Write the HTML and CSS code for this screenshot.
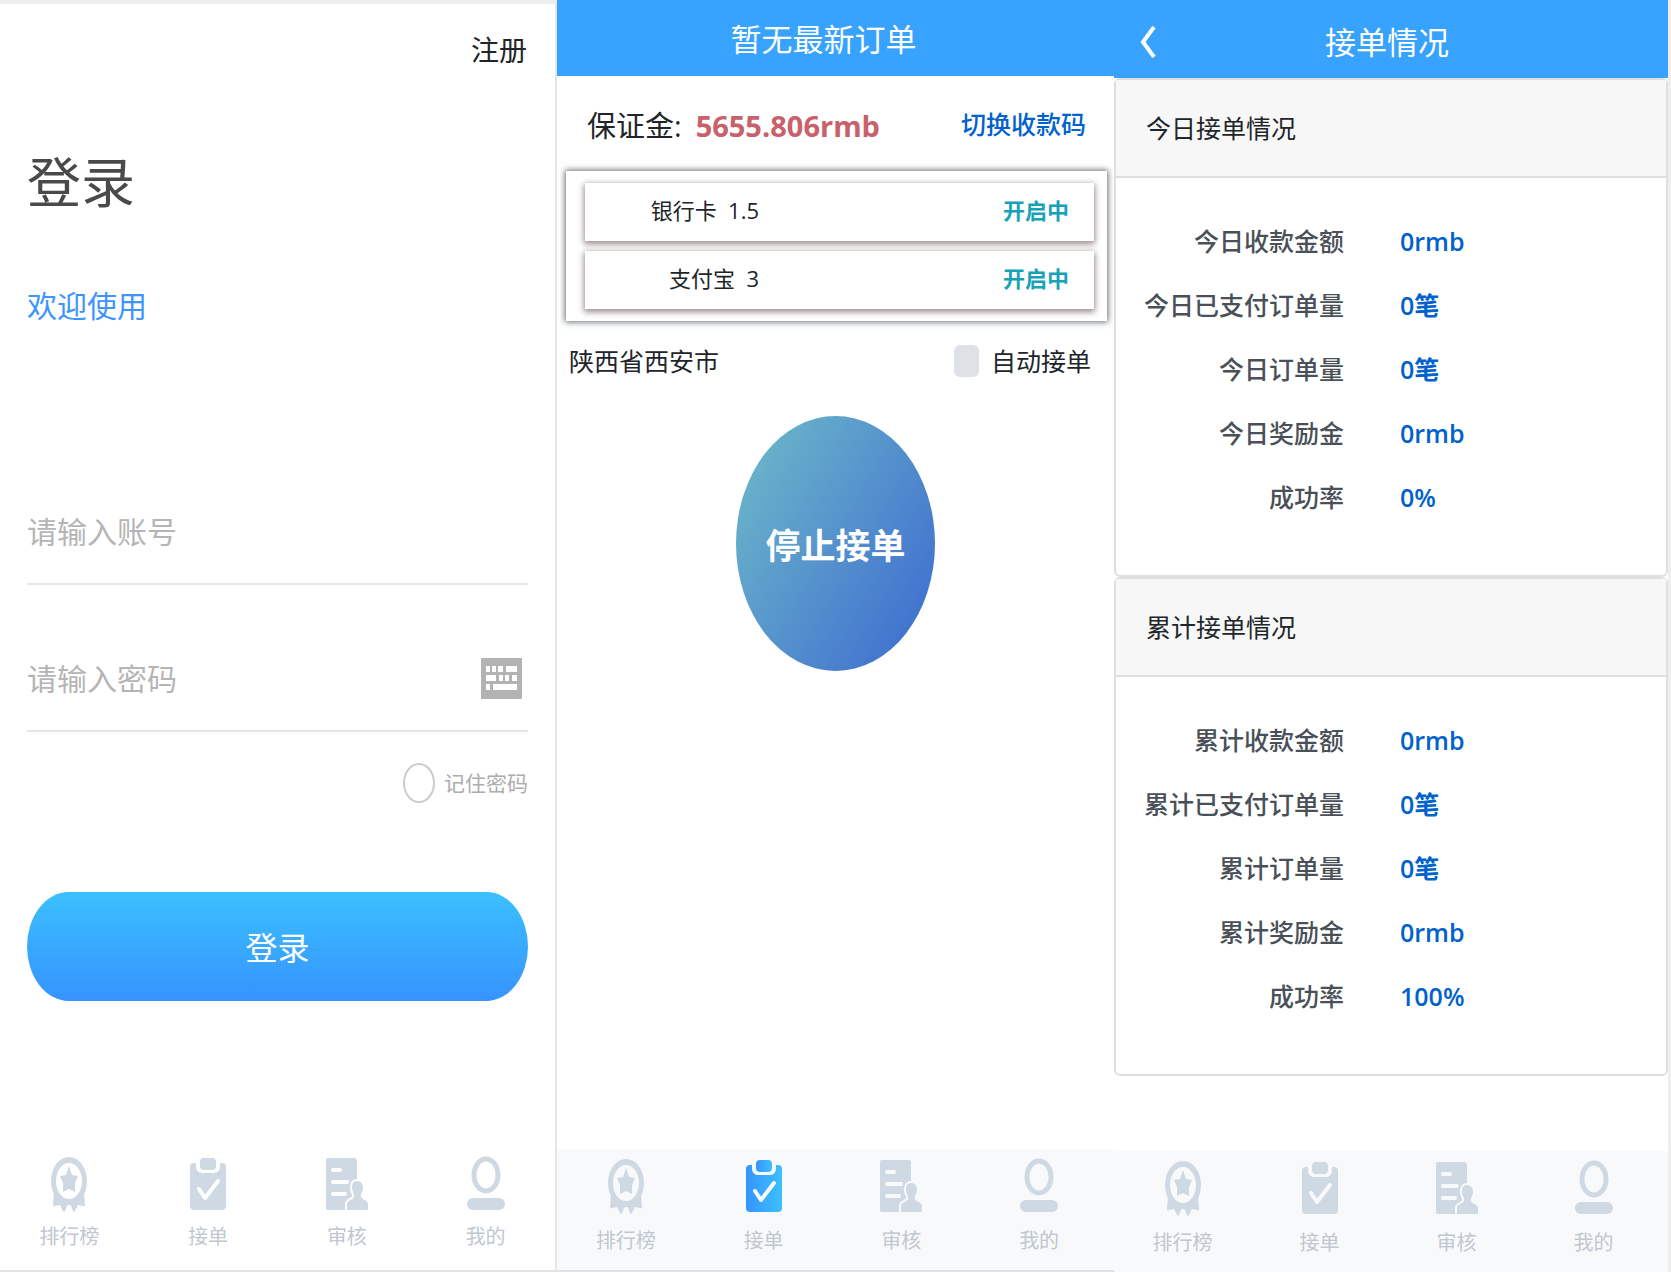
FILE: index.html
```html
<!DOCTYPE html>
<html lang="zh-CN">
<head>
<meta charset="utf-8">
<meta name="viewport" content="width=device-width, initial-scale=1">
<title>接单</title>
<link rel="stylesheet" href="styles.css">
</head>
<body>
<svg class="sprite" aria-hidden="true">
  <defs>
    <linearGradient id="active-fill" x1="0" y1="0" x2="1" y2="0">
      <stop offset="0" stop-color="#3594ff"/>
      <stop offset="1" stop-color="#3cc0ff"/>
    </linearGradient>
  </defs>
  <symbol id="icon-rank" viewBox="0 0 44 58">
    <path d="M7 36 6 49Q6 51 8 50L13 49 16 55Q17 57 18 55L20 50Q22 47 24 50L26 55Q27 57 28 55L31 49 36 50Q38 51 38 49L37 36Z"/>
    <ellipse cx="22" cy="25" rx="18" ry="24"/>
    <ellipse class="cut" cx="22" cy="25" rx="13" ry="18"/>
    <path d="M22 10 25 19 31 20 28 27 28 36 22 33 16 36 16 27 13 20 19 19Z"/>
  </symbol>
  <symbol id="icon-order" viewBox="0 0 44 58">
    <rect x="4" y="7" width="36" height="47" rx="4"/>
    <path class="cut" d="M10 6H34V10Q34 17 28 17H16Q10 17 10 10Z"/>
    <rect x="14" y="2" width="16" height="12" rx="4"/>
    <path class="cut-line" d="M13 33 19 42 32 25"/>
  </symbol>
  <symbol id="icon-review" viewBox="0 0 44 58">
    <path d="M3 2H29Q32 2 32 5V54H3Q1 54 1 52V4Q1 2 3 2Z"/>
    <path class="cut-line" d="M8 14H15M8 26H22M8 38H20"/>
    <path class="cut-edge" d="M32 25C28 25 27 28 27 32 27 36 30 38 29 41 28 44 22 44 22 48V54H43V48C43 44 37 44 36 41 35 38 38 36 38 32 38 28 36 25 32 25Z"/>
  </symbol>
  <symbol id="icon-mine" viewBox="0 0 44 58">
    <ellipse class="ring" cx="22" cy="19" rx="12" ry="16"/>
    <rect x="3" y="42" width="38" height="12" rx="6"/>
  </symbol>
</svg>

<main class="screens">
  <section class="screen login">
    <header class="login-top"><a class="register" href="#">注册</a></header>
    <form class="login-form">
      <h1 class="login-title">登录</h1>
      <p class="welcome">欢迎使用</p>
      <div class="field">
        <input class="field-input" type="text" placeholder="请输入账号" aria-label="账号">
      </div>
      <div class="field">
        <input class="field-input" type="password" placeholder="请输入密码" aria-label="密码">
        <svg class="keyboard" viewBox="0 0 41 41" aria-hidden="true">
          <rect width="41" height="41" rx="1" fill="#b3b3b3"/>
          <path fill="#fff" d="M5 8h4v6H5zM11 8h4v6h-4zM17 8h5v6h-5zM25 8h11v6H25zM5 17h10v6H5zM18 17h4v6h-4zM24 17h4v6h-4zM31 17h5v6h-5zM5 26h4v6H5zM12 26h24v6H12z"/>
        </svg>
      </div>
      <label class="remember"><input class="remember-dot" type="radio" name="remember">记住密码</label>
      <button class="login-button" type="button">登录</button>
    </form>
    <nav class="tabs">
      <a class="tab" href="#"><svg class="tab-icon"><use href="#icon-rank"/></svg>排行榜</a>
      <a class="tab" href="#"><svg class="tab-icon"><use href="#icon-order"/></svg>接单</a>
      <a class="tab" href="#"><svg class="tab-icon"><use href="#icon-review"/></svg>审核</a>
      <a class="tab" href="#"><svg class="tab-icon"><use href="#icon-mine"/></svg>我的</a>
    </nav>
  </section>

  <section class="screen orders">
    <header class="bar bar-orders"><h2 class="bar-title">暂无最新订单</h2></header>
    <div class="deposit">
      <span>保证金:</span>
      <strong class="deposit-value">5655.806rmb</strong>
      <a class="switch-code" href="#">切换收款码</a>
    </div>
    <ul class="channels">
      <li class="channel"><span class="channel-name">银行卡&nbsp; 1.5</span><span class="channel-state">开启中</span></li>
      <li class="channel"><span class="channel-name">支付宝&nbsp; 3</span><span class="channel-state">开启中</span></li>
    </ul>
    <div class="place">
      <span>陕西省西安市</span>
      <label class="auto"><input class="auto-box" type="checkbox">自动接单</label>
    </div>
    <button class="stop" type="button">停止接单</button>
    <nav class="tabs tabs-filled">
      <a class="tab" href="#"><svg class="tab-icon"><use href="#icon-rank"/></svg>排行榜</a>
      <a class="tab tab-active" href="#"><svg class="tab-icon"><use href="#icon-order"/></svg>接单</a>
      <a class="tab" href="#"><svg class="tab-icon"><use href="#icon-review"/></svg>审核</a>
      <a class="tab" href="#"><svg class="tab-icon"><use href="#icon-mine"/></svg>我的</a>
    </nav>
  </section>

  <section class="screen stats">
    <header class="bar bar-stats">
      <button class="back" type="button" aria-label="返回"><svg class="back-icon" viewBox="0 0 16 32"><path d="M14 1 3 16 14 31"/></svg></button>
      <h2 class="bar-title">接单情况</h2>
    </header>
    <article class="card">
      <h3 class="card-title">今日接单情况</h3>
      <dl class="figures">
        <dt>今日收款金额</dt><dd>0rmb</dd>
        <dt>今日已支付订单量</dt><dd>0笔</dd>
        <dt>今日订单量</dt><dd>0笔</dd>
        <dt>今日奖励金</dt><dd>0rmb</dd>
        <dt>成功率</dt><dd>0%</dd>
      </dl>
    </article>
    <article class="card">
      <h3 class="card-title">累计接单情况</h3>
      <dl class="figures">
        <dt>累计收款金额</dt><dd>0rmb</dd>
        <dt>累计已支付订单量</dt><dd>0笔</dd>
        <dt>累计订单量</dt><dd>0笔</dd>
        <dt>累计奖励金</dt><dd>0rmb</dd>
        <dt>成功率</dt><dd>100%</dd>
      </dl>
    </article>
    <nav class="tabs tabs-filled">
      <a class="tab" href="#"><svg class="tab-icon"><use href="#icon-rank"/></svg>排行榜</a>
      <a class="tab" href="#"><svg class="tab-icon"><use href="#icon-order"/></svg>接单</a>
      <a class="tab" href="#"><svg class="tab-icon"><use href="#icon-review"/></svg>审核</a>
      <a class="tab" href="#"><svg class="tab-icon"><use href="#icon-mine"/></svg>我的</a>
    </nav>
  </section>
</main>
</body>
</html>
```
FILE: styles.css
```css
*, *::before, *::after { box-sizing: border-box; }

body {
  margin: 0;
  background: #fff;
  color: #212529;
  font-family: "Open Sans", "Noto Sans CJK SC", sans-serif;
  font-size: 25px;
  line-height: 32px;
}

h1, h2, h3, p, ul, dl, dd { margin: 0; padding: 0; font-weight: 400; }
a { color: inherit; text-decoration: none; }
button, input { font: inherit; }
button { border: 0; padding: 0; cursor: pointer; }

.sprite { display: block; width: 0; height: 0; }

.screens {
  display: grid;
  grid-template-columns: repeat(3, 1fr);
  min-height: 100vh;
}
.screen { display: flex; flex-direction: column; }

/* Login */
.login {
  border-top: 4px solid #eee;
  border-right: 2px solid #e6e6e6;
  border-bottom: 2px solid #e2e2e2;
}
.login-top { display: flex; justify-content: flex-end; padding: 28px 28px 0; }
.register { font-size: 28px; line-height: 36px; }
.login-form { display: flex; flex-direction: column; padding: 78px 27px 0; }
.login-title { color: #4a4a4a; font-size: 54px; line-height: 72px; }
.welcome { margin-top: 68px; color: #3d94ff; font-size: 30px; line-height: 40px; }
.field {
  display: flex;
  align-items: center;
  height: 147px;
  padding: 42px 6px 0 0;
  border-bottom: 2px solid #e6e6e6;
}
.welcome + .field { margin-top: 112px; }
.field-input {
  flex: 1;
  min-width: 0;
  padding: 0;
  border: 0;
  outline: 0;
  background: none;
  font-size: 30px;
  line-height: 40px;
}
.field-input::placeholder { color: #b5b5b5; opacity: 1; }
.keyboard { width: 41px; height: 41px; }
.remember {
  display: flex;
  align-items: center;
  align-self: flex-end;
  gap: 9px;
  margin-top: 31px;
  color: #adadad;
  font-size: 21px;
}
.remember-dot {
  appearance: none;
  width: 32px;
  height: 40px;
  margin: 0;
  border: 2px solid #ccc;
  border-radius: 50%;
}
.login-button {
  height: 109px;
  margin-top: 89px;
  padding-top: 2px;
  border-radius: 42px / 55px;
  background: linear-gradient(#3bc0ff, #3693ff);
  color: #fff;
  font-size: 32px;
}

/* Tab bar */
.tabs {
  --tab-surface: #fff;
  display: grid;
  grid-template-columns: repeat(4, 1fr);
  margin-top: auto;
  padding-bottom: 18px;
}
.tabs-filled {
  --tab-surface: #f8f9fa;
  padding: 9px 6px 14px 0;
  background: #f8f9fa;
}
.tab {
  display: flex;
  flex-direction: column;
  align-items: center;
  gap: 8px;
  color: #c0c7d0;
  font-size: 20px;
  line-height: 30px;
}
.tabs-filled .tab { gap: 10px; }
.tab-icon { width: 44px; height: 58px; fill: #ced9e4; stroke: none; }
.tab-active .tab-icon { fill: url(#active-fill); }
.cut { fill: var(--tab-surface); }
.cut-line { fill: none; stroke: var(--tab-surface); stroke-width: 4; stroke-linecap: round; stroke-linejoin: round; }
.cut-edge { stroke: var(--tab-surface); stroke-width: 4; paint-order: stroke; }
.ring { fill: none; stroke: #ced9e4; stroke-width: 5; }

/* Blue title bar */
.bar {
  display: grid;
  grid-template-columns: 48px 1fr 48px;
  align-items: center;
  height: 76px;
  background: #38a2ff;
  color: #fff;
}
.bar-title { grid-column: 2; font-size: 31px; line-height: 40px; text-align: center; }
.bar-orders { padding: 2px 24px 0 0; }
.bar-stats { height: 78px; padding: 6px 8px 0 0; }
.back { justify-self: end; width: 24px; height: 32px; background: none; }
.back-icon { display: block; width: 16px; height: 32px; margin-left: 2px; fill: none; stroke: #fff; stroke-width: 4; }

/* Orders */
.orders .tabs { border-bottom: 2px solid #e2e2e2; }
.deposit {
  display: flex;
  align-items: center;
  padding: 30px 28px 0 30px;
  font-size: 29px;
  line-height: 40px;
}
.deposit-value { margin-left: 14px; color: #c8616b; font-size: 29px; font-weight: 700; }
.switch-code { margin-left: auto; padding-bottom: 4px; color: #0062cc; font-size: 25px; font-weight: 500; line-height: 36px; }
.channels {
  display: flex;
  flex-direction: column;
  gap: 10px;
  margin: 25px 7px 0 9px;
  padding: 12px 13px 12px 19px;
  list-style: none;
  background: #fff;
  box-shadow: 0 0 6px 1px #666c72;
}
.channel {
  display: grid;
  grid-template-columns: 174px 1fr;
  align-items: center;
  height: 58px;
  padding: 0 25px 4px 0;
  background: #fff;
  box-shadow: 0 2px 6px 1px #9a8c8c;
  font-size: 22px;
}
.channel-name, .channel-state { text-align: right; }
.channel-state { color: #17a2b8; font-weight: 700; }
.place {
  display: flex;
  align-items: center;
  justify-content: space-between;
  padding: 24px 23px 0 12px;
}
.auto { display: flex; align-items: center; gap: 12px; }
.auto-box {
  appearance: none;
  width: 25px;
  height: 32px;
  margin: 0;
  border-radius: 6px;
  background: #dee2e6;
}
.stop {
  align-self: center;
  width: 199px;
  height: 255px;
  margin-top: 39px;
  padding-top: 4px;
  border-radius: 50%;
  background: linear-gradient(120deg, #6fbcc9, #3b68d0);
  color: #fff;
  font-size: 35px;
  font-weight: 700;
}

/* Statistics */
.stats { border-right: 3px solid #eee; }
.card { border: 2px solid #dfdfdf; border-radius: 6px; }
.card-title {
  padding: 32px 30px;
  border-bottom: 2px solid #dfdfdf;
  background: #f7f7f7;
  font-size: 25px;
}
.figures {
  display: grid;
  grid-template-columns: 228px 1fr;
  column-gap: 56px;
  padding: 31px 0 46px;
  line-height: 64px;
}
.figures dt { color: #495057; font-weight: 500; text-align: right; }
.figures dd { color: #0062cc; font-weight: 600; }
```
